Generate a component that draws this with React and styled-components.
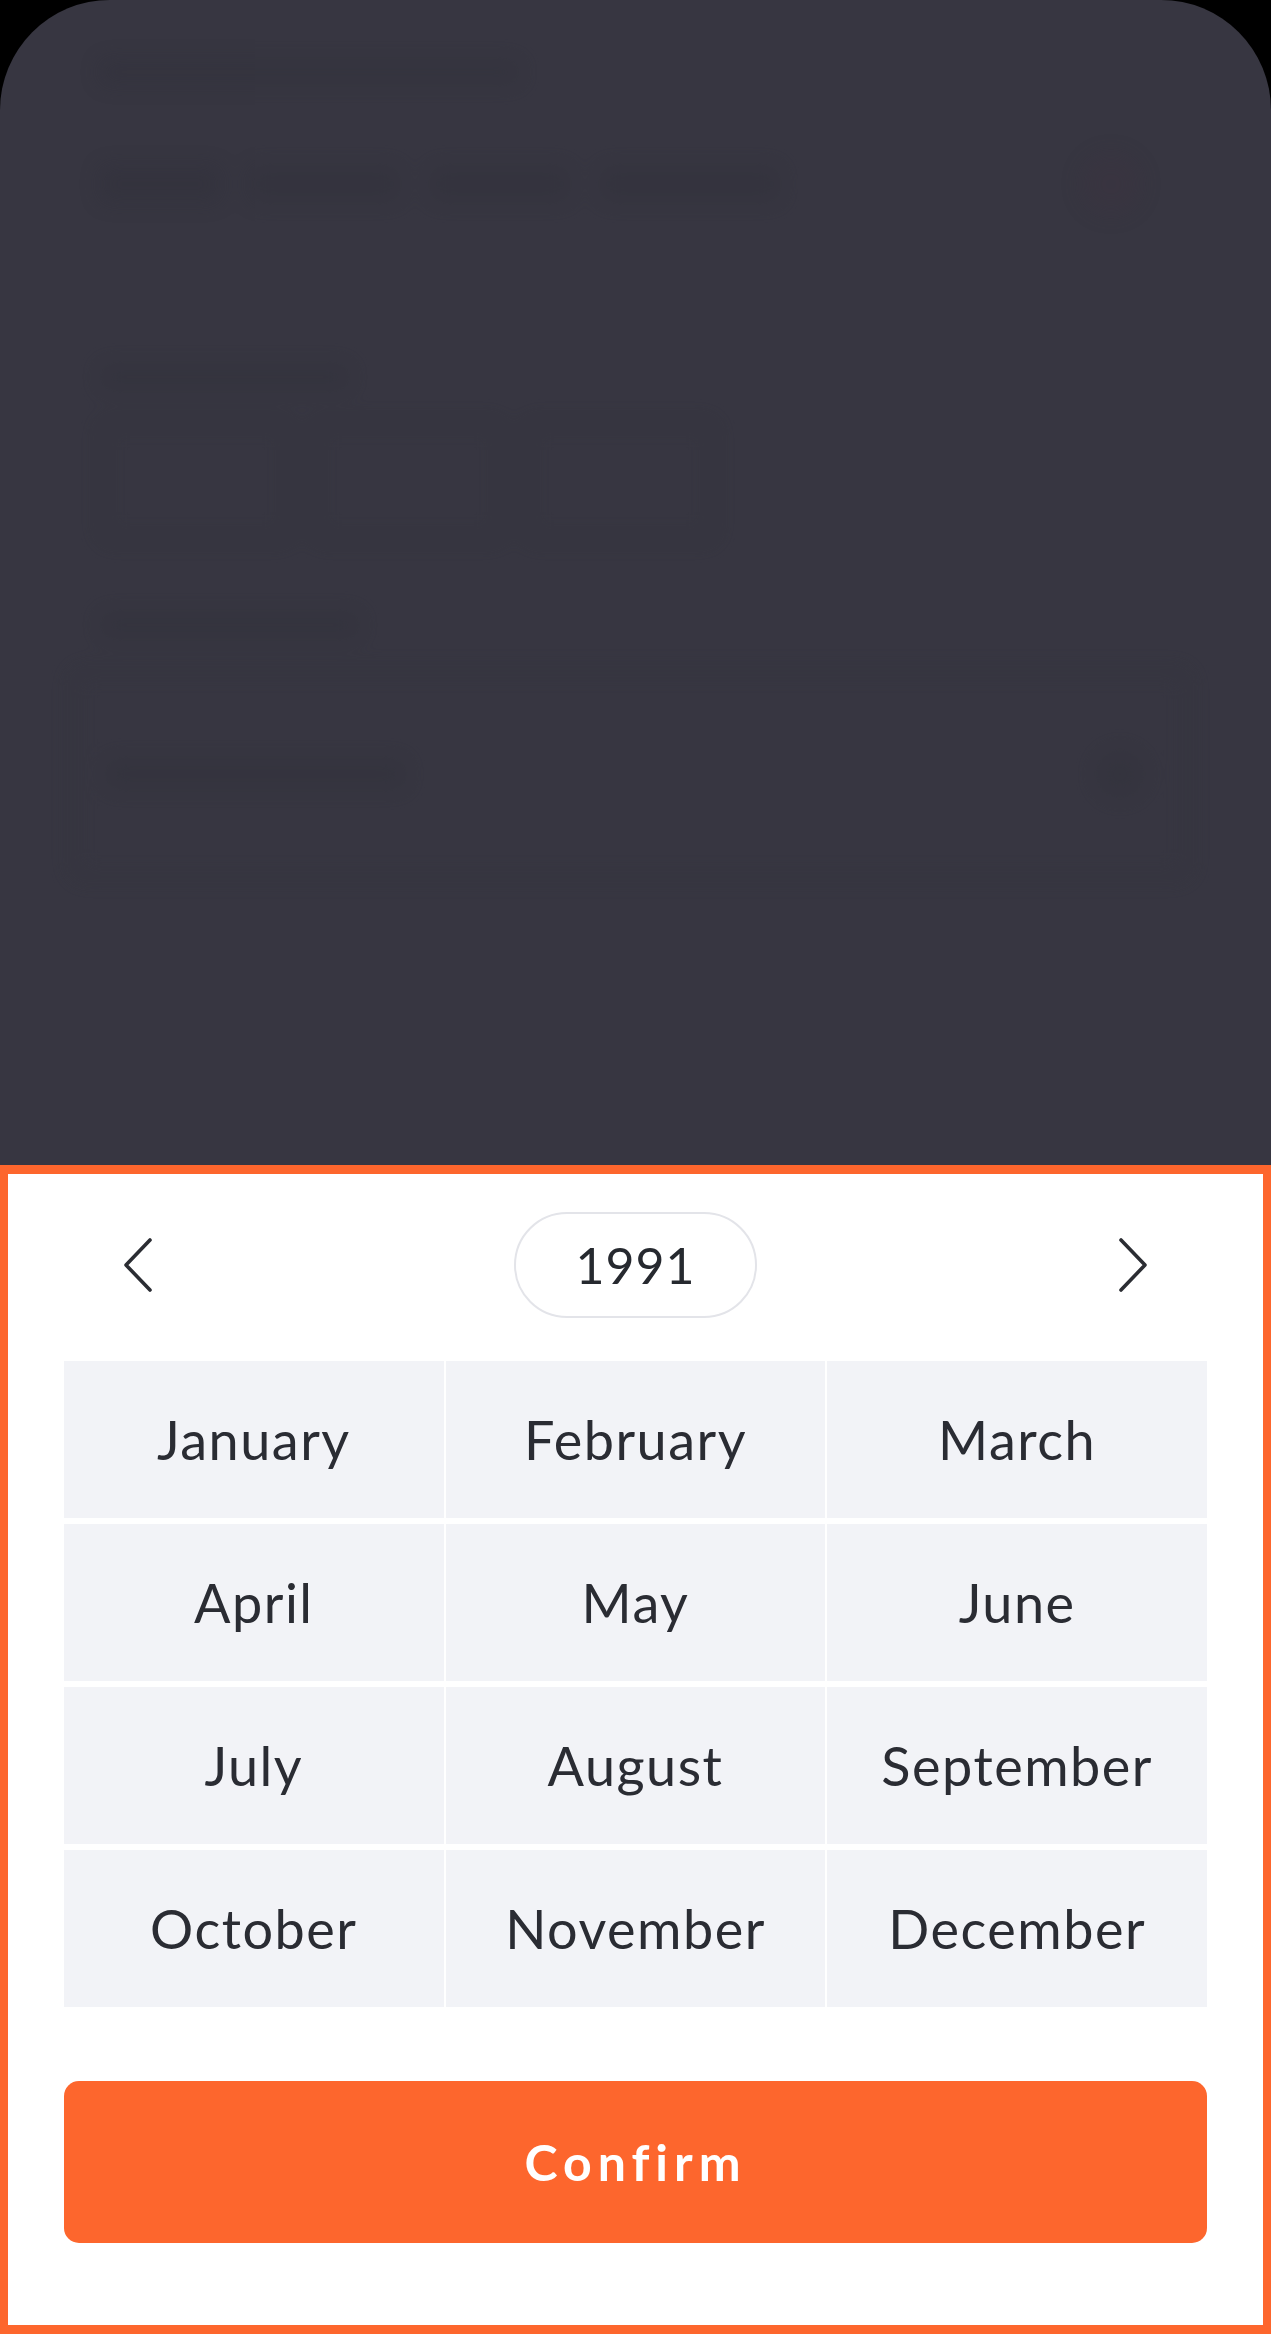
import React from 'react';
import styled, { createGlobalStyle } from 'styled-components';

const GlobalStyle = createGlobalStyle`
  html, body {
    margin: 0;
    padding: 0;
    background: #000;
  }
  body {
    font-family: 'Lato', 'Open Sans', sans-serif;
  }
`;

const MONTHS = [
  'January', 'February', 'March',
  'April', 'May', 'June',
  'July', 'August', 'September',
  'October', 'November', 'December',
];

const Screen = styled.div`
  width: 1271px;
  height: 2334px;
  display: flex;
  flex-direction: column;
  background: #373641;
  border-radius: 110px 110px 0 0;
  overflow: hidden;
`;

// dimmed, blurred page behind the sheet
const Backdrop = styled.div`
  flex: 1;
  display: flex;
  flex-direction: column;
  padding: 60px 80px 0 100px;
  filter: blur(10px);
  opacity: 0.35;
`;

const GhostLine = styled.div`
  height: ${(p) => p.h || 26}px;
  width: ${(p) => p.w}px;
  margin-top: ${(p) => p.mt || 0}px;
  background: #2f2f39;
  border-radius: 8px;
`;

const GhostRow = styled.div`
  display: flex;
  align-items: center;
  gap: ${(p) => p.gap || 24}px;
  margin-top: ${(p) => p.mt || 0}px;
  padding-right: ${(p) => p.pr || 0}px;
`;

const GhostDot = styled.div`
  width: ${(p) => p.size}px;
  height: ${(p) => p.size}px;
  border-radius: 50%;
  background: ${(p) => p.color};
  margin-left: auto;
`;

const GhostBox = styled.div`
  width: ${(p) => p.w}px;
  height: ${(p) => p.h}px;
  border: 6px solid #303039;
  border-radius: 10px;
`;

const GhostField = styled.div`
  margin-top: 30px;
  margin-left: -30px;
  height: 200px;
  border: 6px solid #33333d;
  border-radius: 14px;
  display: flex;
  align-items: center;
  padding: 0 40px 0 30px;
`;

const Sheet = styled.div`
  background: #fff;
  border: 8px solid #fd662d;
  border-top-width: 9px;
  border-bottom-width: 9px;
  padding: 38px 56px 82px;
  display: flex;
  flex-direction: column;
`;

const YearBar = styled.div`
  display: flex;
  align-items: center;
  justify-content: space-between;
  padding: 0 59px;
`;

const Arrow = styled.button`
  background: none;
  border: none;
  padding: 0;
  width: 30px;
  height: 54px;
  display: flex;
  align-items: center;
  justify-content: center;
  cursor: pointer;
  color: #2b2d33;
`;

const YearPill = styled.div`
  width: 243px;
  height: 106px;
  box-sizing: border-box;
  border: 2px solid #e3e4e9;
  border-radius: 53px;
  display: flex;
  align-items: center;
  justify-content: center;
  font-size: 50px;
  color: #26292f;
  letter-spacing: 1px;
`;

const MonthGrid = styled.div`
  margin-top: 43px;
  display: grid;
  grid-template-columns: repeat(3, 1fr);
  column-gap: 2px;
  row-gap: 6px;
`;

const MonthCell = styled.button`
  height: 157px;
  border: none;
  background: #f2f3f7;
  font-family: inherit;
  font-size: 54px;
  color: #2a2c33;
  letter-spacing: 1.5px;
  cursor: pointer;
  padding: 0;
`;

const ConfirmButton = styled.button`
  margin-top: 74px;
  height: 162px;
  border: none;
  border-radius: 15px;
  background: #fd662d;
  color: #fff;
  font-family: inherit;
  font-size: 50px;
  font-weight: 700;
  letter-spacing: 6px;
  cursor: pointer;
`;

const Chevron = ({ dir }) => (
  <svg width="30" height="54" viewBox="0 0 30 54" fill="none">
    <path
      d={dir === 'left' ? 'M27 2 L3 27 L27 52' : 'M3 2 L27 27 L3 52'}
      stroke="currentColor"
      strokeWidth="3.6"
      strokeLinecap="round"
      strokeLinejoin="round"
    />
  </svg>
);

export default function App() {
  return (
    <>
      <GlobalStyle />
      <Screen>
        <Backdrop>
          <GhostLine w={420} h={24} />
          <GhostRow mt={70} gap={30} pr={50}>
            <GhostLine w={120} h={36} />
            <GhostLine w={150} h={36} />
            <GhostLine w={140} h={36} />
            <GhostLine w={180} h={36} />
            <GhostDot size={60} color="#3d3340" />
          </GhostRow>
          <GhostLine w={250} h={26} mt={150} />
          <GhostRow mt={30} gap={20}>
            <GhostBox w={180} h={110} />
            <GhostBox w={180} h={110} />
            <GhostBox w={180} h={110} />
          </GhostRow>
          <GhostLine w={260} h={26} mt={70} />
          <GhostField>
            <GhostLine w={300} h={30} />
            <GhostDot size={50} color="#30303a" />
          </GhostField>
        </Backdrop>
        <Sheet>
          <YearBar>
            <Arrow aria-label="Previous year"><Chevron dir="left" /></Arrow>
            <YearPill>1991</YearPill>
            <Arrow aria-label="Next year"><Chevron dir="right" /></Arrow>
          </YearBar>
          <MonthGrid>
            {MONTHS.map((m) => (
              <MonthCell key={m}>{m}</MonthCell>
            ))}
          </MonthGrid>
          <ConfirmButton>Confirm</ConfirmButton>
        </Sheet>
      </Screen>
    </>
  );
}
